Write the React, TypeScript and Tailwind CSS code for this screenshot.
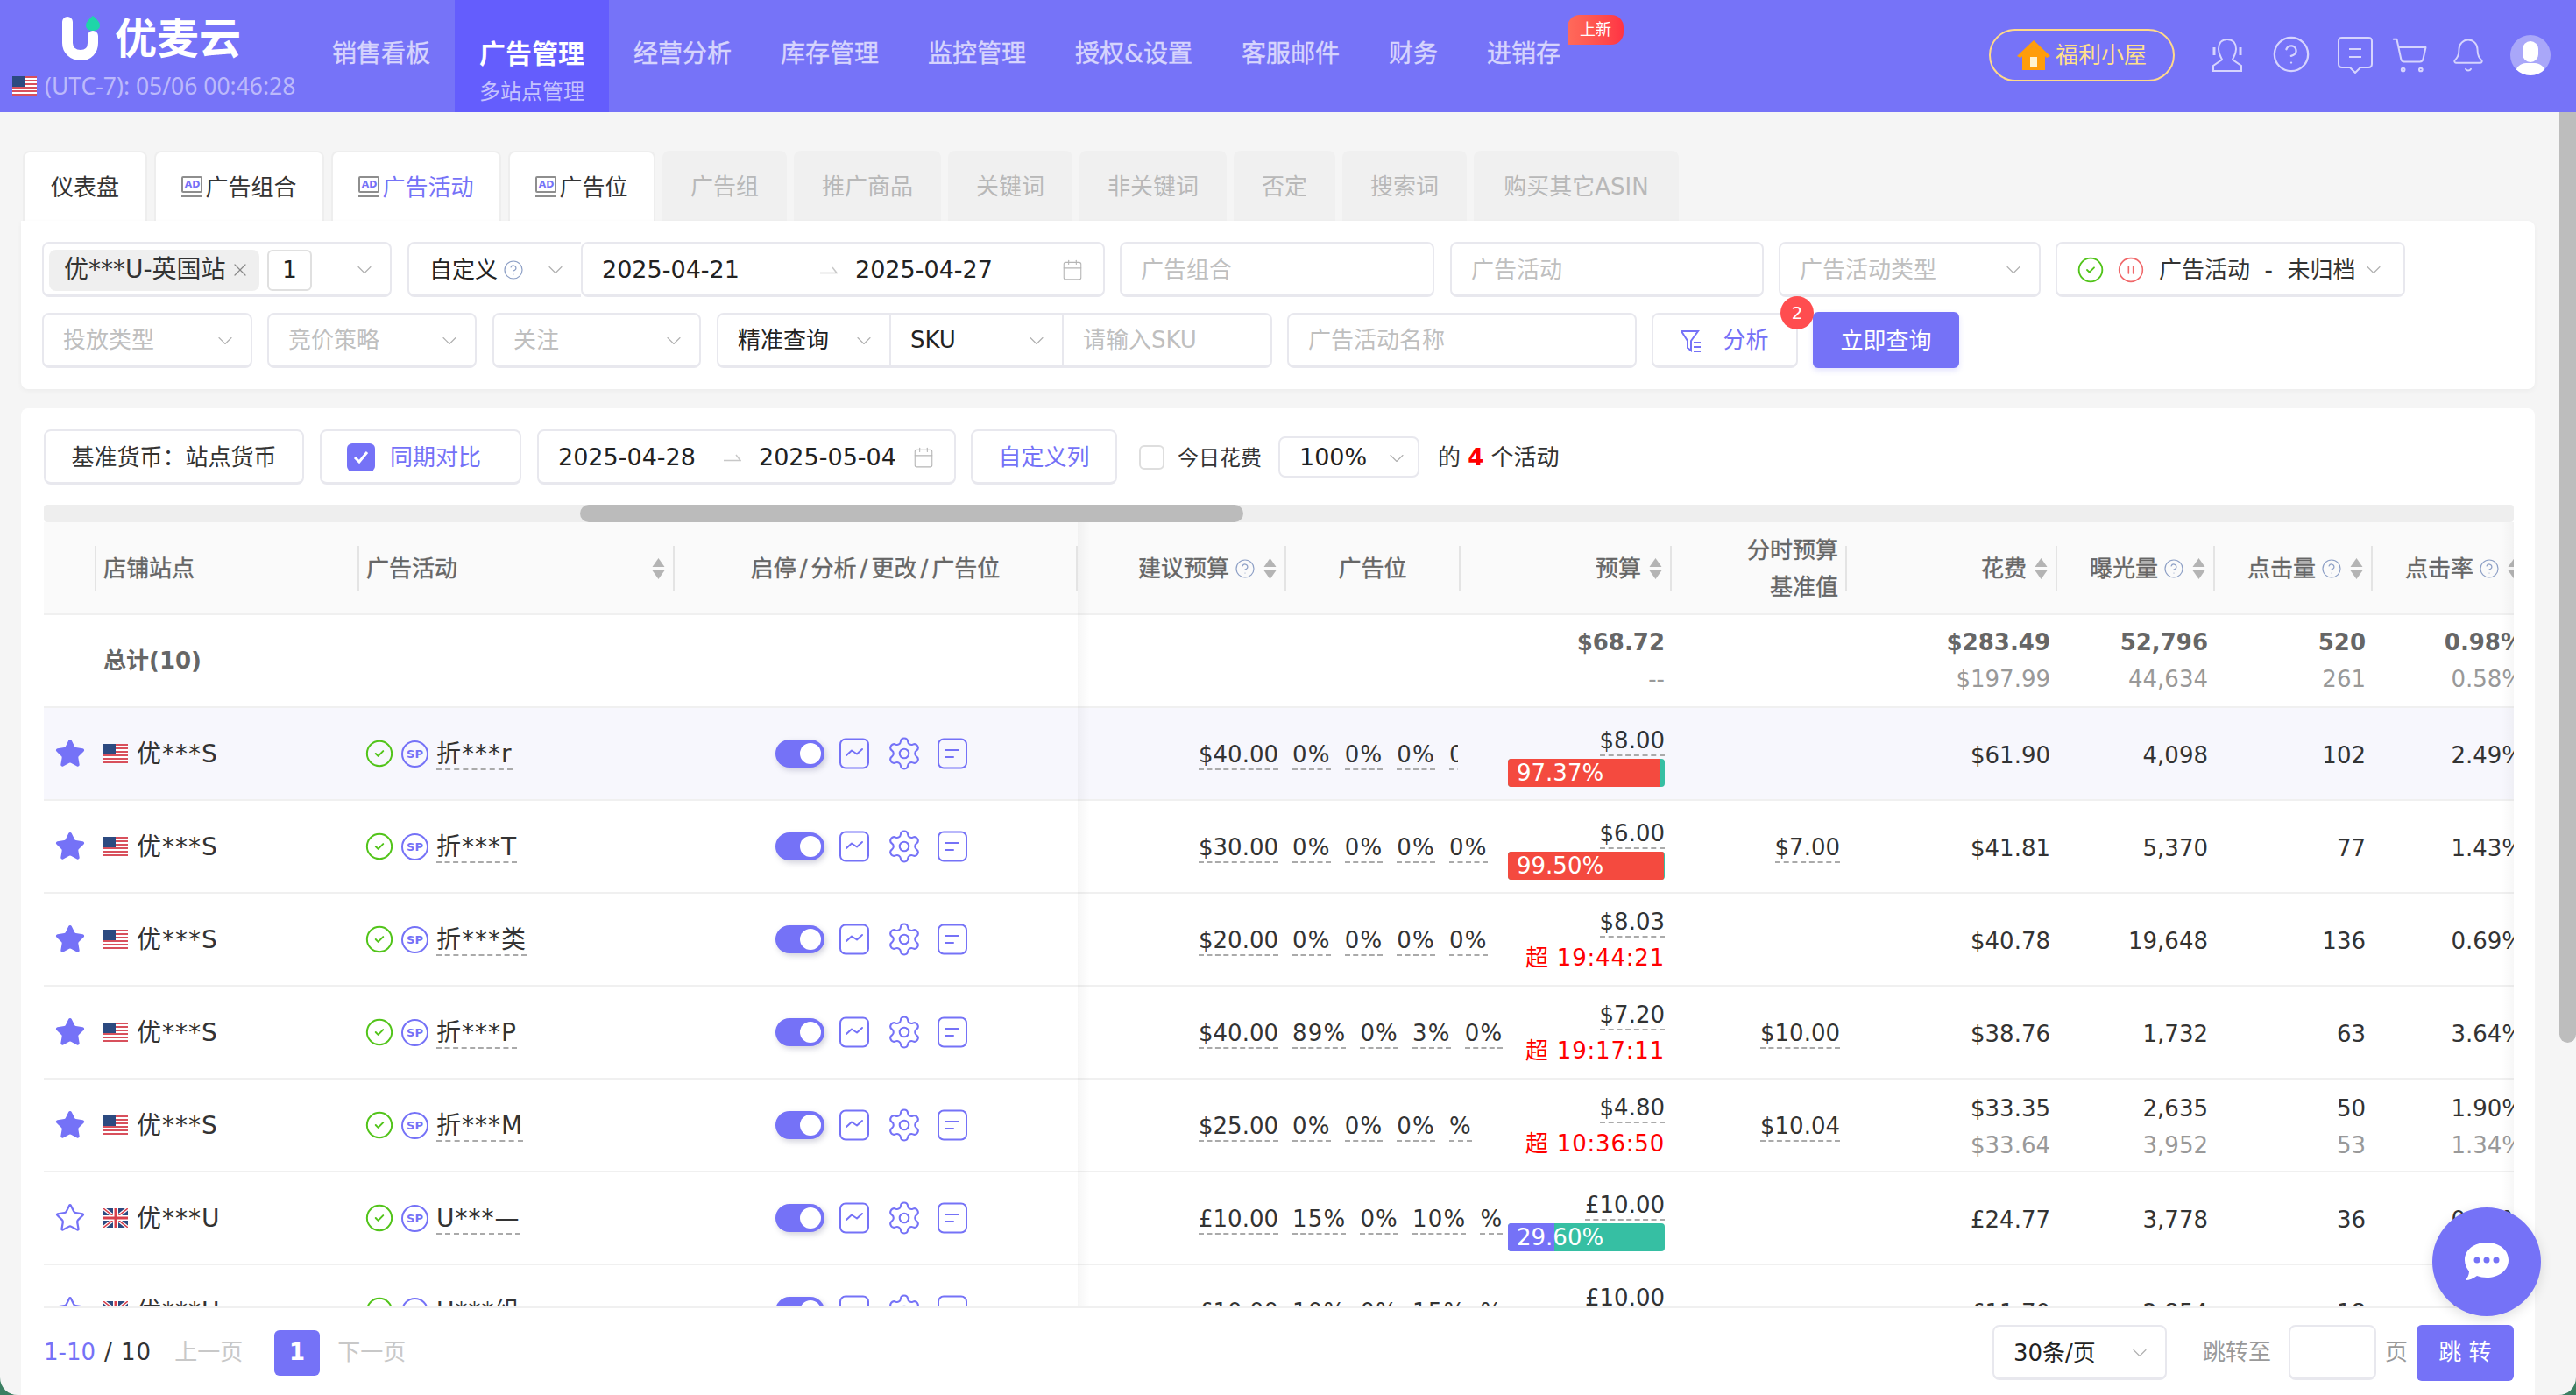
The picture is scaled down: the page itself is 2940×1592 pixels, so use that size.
import { Bell, Calendar, ChevronDown, CircleCheck, CircleHelp, CirclePause, ShoppingCart, Settings, Star, X } from "lucide-react";
import type { ReactNode } from "react";

const PURPLE = "#7572f7";

const navItems = [
  { label: "销售看板" },
  { label: "广告管理", active: true },
  { label: "经营分析" },
  { label: "库存管理" },
  { label: "监控管理" },
  { label: "授权&设置" },
  { label: "客服邮件" },
  { label: "财务" },
  { label: "进销存" },
];

const mutedTabs = [
  { label: "广告组", w: "w-[142px]" },
  { label: "推广商品", w: "w-[168px]" },
  { label: "关键词", w: "w-[142px]" },
  { label: "非关键词", w: "w-[168px]" },
  { label: "否定", w: "w-[116px]" },
  { label: "搜索词", w: "w-[142px]" },
  { label: "购买其它ASIN", w: "w-[234px]" },
];

type Row = {
  solid: boolean;
  flag: "us" | "uk";
  store: string;
  name: string;
  bid: string;
  pcts: string[];
  budget: string;
  bar?: { pct: number; left: string; right: string; label: string };
  over?: string;
  hourly?: string;
  spend: string[];
  shows: string[];
  clicks: string[];
  ctr: string[];
};

const rows: Row[] = [
  { solid: true, flag: "us", store: "优***S", name: "折***r", bid: "$40.00", pcts: ["0%", "0%", "0%", "0%"], budget: "$8.00", bar: { pct: 97.37, left: "#f44a3f", right: "#36bfa3", label: "97.37%" }, spend: ["$61.90"], shows: ["4,098"], clicks: ["102"], ctr: ["2.49%"] },
  { solid: true, flag: "us", store: "优***S", name: "折***T", bid: "$30.00", pcts: ["0%", "0%", "0%", "0%"], budget: "$6.00", bar: { pct: 99.5, left: "#f44a3f", right: "#36bfa3", label: "99.50%" }, hourly: "$7.00", spend: ["$41.81"], shows: ["5,370"], clicks: ["77"], ctr: ["1.43%"] },
  { solid: true, flag: "us", store: "优***S", name: "折***类", bid: "$20.00", pcts: ["0%", "0%", "0%", "0%"], budget: "$8.03", over: "19:44:21", spend: ["$40.78"], shows: ["19,648"], clicks: ["136"], ctr: ["0.69%"] },
  { solid: true, flag: "us", store: "优***S", name: "折***P", bid: "$40.00", pcts: ["89%", "0%", "3%", "0%"], budget: "$7.20", over: "19:17:11", hourly: "$10.00", spend: ["$38.76"], shows: ["1,732"], clicks: ["63"], ctr: ["3.64%"] },
  { solid: true, flag: "us", store: "优***S", name: "折***M", bid: "$25.00", pcts: ["0%", "0%", "0%", "%"], budget: "$4.80", over: "10:36:50", hourly: "$10.04", spend: ["$33.35", "$33.64"], shows: ["2,635", "3,952"], clicks: ["50", "53"], ctr: ["1.90%", "1.34%"] },
  { solid: false, flag: "uk", store: "优***U", name: "U***—", bid: "£10.00", pcts: ["15%", "0%", "10%", "%"], budget: "£10.00", bar: { pct: 29.6, left: PURPLE, right: "#36bfa3", label: "29.60%" }, spend: ["£24.77"], shows: ["3,778"], clicks: ["36"], ctr: ["0.95%"] },
  { solid: false, flag: "uk", store: "优***U", name: "U***组", bid: "£10.00", pcts: ["10%", "0%", "15%", "%"], budget: "£10.00", bar: { pct: 20, left: PURPLE, right: "#36bfa3", label: "" }, spend: ["£11.70"], shows: ["2,854"], clicks: ["18"], ctr: ["0.63%"] },
];

function UsFlag() {
  return (
    <svg width="28" height="22" viewBox="0 0 28 22" className="shrink-0">
      <rect width="28" height="22" fill="#fff" />
      {[0, 4, 8, 12, 16, 20].map((y) => (
        <rect key={y} y={y} width="28" height="2" fill="#d8505c" />
      ))}
      <rect width="14" height="12" fill="#2c4a80" />
    </svg>
  );
}

function UkFlag() {
  return (
    <svg width="28" height="22" viewBox="0 0 28 22" className="shrink-0">
      <rect width="28" height="22" fill="#2c4a80" />
      <path d="M0 0L28 22M28 0L0 22" stroke="#fff" strokeWidth="4" />
      <path d="M0 0L28 22M28 0L0 22" stroke="#d8404c" strokeWidth="1.5" />
      <path d="M14 0V22M0 11H28" stroke="#fff" strokeWidth="6" />
      <path d="M14 0V22M0 11H28" stroke="#d8404c" strokeWidth="3" />
    </svg>
  );
}

function Chevron() {
  return <ChevronDown size={28} strokeWidth={1} className="shrink-0 text-[#b0b0b0]" />;
}

function HalfArrow() {
  return (
    <svg width="20" height="10" viewBox="0 0 20 10" className="shrink-0">
      <path d="M0 8.5H19L14 2" fill="none" stroke="#c8c8c8" strokeWidth="1.5" />
    </svg>
  );
}

function Sorter() {
  return (
    <svg width="15" height="24" viewBox="0 0 15 24" className="shrink-0">
      <path d="M7.5 0L14.5 10H0.5Z" fill="#b4b4b4" />
      <path d="M7.5 24L14.5 14H0.5Z" fill="#b4b4b4" />
    </svg>
  );
}

function Help() {
  return <CircleHelp size={24} strokeWidth={1.2} className="-ml-[3px] shrink-0 text-[#8ea0c6]" />;
}

function AdMark() {
  return (
    <span className="mr-[3px] inline-flex h-[26px] w-[24px] flex-col">
      <span className="flex h-[19px] items-center justify-center rounded-[2px] border-2 border-[#8e8e8e] text-[11px] font-bold leading-none text-[#7572f7]">AD</span>
      <span className="mt-[3px] h-[2px] bg-[#8e8e8e]" />
    </span>
  );
}

function Field({ className = "", children }: { className?: string; children: ReactNode }) {
  return (
    <div className={`flex h-[63px] shrink-0 items-center justify-between border-2 border-b-[3px] border-[#e8e8ee] bg-white pt-[2px] ${className}`}>
      {children}
    </div>
  );
}

function SelectField({ w, label, dark }: { w: string; label: string; dark?: boolean }) {
  return (
    <Field className={`${w} rounded-[8px] pl-[22px] pr-[15px]`}>
      <span className={dark ? "text-[#222]" : "text-[#bfbfbf]"}>{label}</span>
      <Chevron />
    </Field>
  );
}

function InputField({ w, label }: { w: string; label: string }) {
  return (
    <Field className={`${w} rounded-[8px] pl-[22px]`}>
      <span className="text-[#bfbfbf]">{label}</span>
    </Field>
  );
}

function Dashed({ children, className = "" }: { children: ReactNode; className?: string }) {
  return (
    <span className={`inline-block border-b-2 border-dashed border-[#aaa] leading-[32px] whitespace-nowrap ${className}`}>
      {children}
    </span>
  );
}

function HeadCell({ w, children }: { w: string; children?: ReactNode }) {
  return (
    <div className={`flex h-[52px] shrink-0 items-center justify-end gap-[9px] border-r-2 border-[#e4e4e4] pr-[9px] ${w}`}>
      {children}
    </div>
  );
}

function Values({ w, lines, strong }: { w: string; lines: string[]; strong?: boolean }) {
  return (
    <div className={`shrink-0 pr-[8px] text-right ${w}`}>
      <div className={strong ? "font-bold leading-[42px] text-[#666]" : "leading-[42px] text-[#333]"}>{lines[0]}</div>
      {lines[1] && <div className="leading-[42px] text-[#999]">{lines[1]}</div>}
    </div>
  );
}

function ActionIcons() {
  return (
    <div className="flex w-[460px] shrink-0 items-center pl-[115px] text-[#7572f7]">
      <span className="relative h-[32px] w-[56px] rounded-full bg-[#7572f7] shadow-[2px_3px_6px_rgba(80,80,120,0.25)]">
        <span className="absolute right-[4px] top-[4px] h-[24px] w-[24px] rounded-full bg-white" />
      </span>
      <svg width="36" height="36" viewBox="0 0 36 36" fill="none" stroke="currentColor" strokeWidth="2" className="ml-[16px]">
        <rect x="2" y="1.5" width="32" height="33" rx="6" />
        <path d="M9 20L15 14.5L21 18.5L27 13" strokeLinecap="round" strokeLinejoin="round" />
      </svg>
      <Settings size={42} strokeWidth={1.2} className="ml-[18px]" />
      <svg width="36" height="36" viewBox="0 0 36 36" fill="none" stroke="currentColor" strokeWidth="2" className="ml-[16px]">
        <rect x="2" y="1.5" width="32" height="33" rx="6" />
        <path d="M10 14H25M10 22H19" strokeLinecap="round" />
      </svg>
    </div>
  );
}

function TableRow({ row, index }: { row: Row; index: number }) {
  return (
    <div className={`flex h-[106px] w-[3000px] items-center border-b-2 border-[#f0f0f0] text-[#333] ${index === 0 ? "bg-[#f7f7fd]" : ""}`}>
      <div className="flex w-[60px] shrink-0 justify-center">
        <Star size={36} strokeWidth={1.5} className="text-[#7572f7]" fill={row.solid ? PURPLE : "none"} />
      </div>
      <div className="flex w-[300px] shrink-0 items-center gap-[10px] pl-[8px]">
        {row.flag === "us" ? <UsFlag /> : <UkFlag />}
        <span className="pt-[2px] text-[28px] tracking-[1px]">{row.store}</span>
      </div>
      <div className="flex w-[360px] shrink-0 items-center pl-[6px]">
        <CircleCheck size={34} strokeWidth={1.4} className="shrink-0 text-[#52c41a]" />
        <span className="ml-[8px] flex h-[31px] w-[31px] shrink-0 items-center justify-center rounded-full border-2 border-[#7572f7] text-[13px] font-bold leading-none text-[#7572f7]">SP</span>
        <span className="ml-[9px] pt-[2px]"><Dashed className="text-[28px] tracking-[1px]">{row.name}</Dashed></span>
      </div>
      <ActionIcons />
      <div className="flex w-[438px] shrink-0 items-center gap-[16px] pl-[138px] pt-[3px] whitespace-nowrap">
        <Dashed>{row.bid}</Dashed>
        {row.pcts.map((p, i) =>
          index === 0 && i === 3 ? (
            <span key={i} className="w-[10px] overflow-hidden"><Dashed className="tracking-[1.2px]">{p}</Dashed></span>
          ) : (
            <Dashed key={i} className="tracking-[1.2px]">{p}</Dashed>
          ),
        )}
      </div>
      <div className="flex w-[240px] shrink-0 flex-col items-end pr-[8px] pt-[6px]">
        <Dashed>{row.budget}</Dashed>
        {row.bar && (
          <div className="relative mt-[3px] h-[32px] w-[179px] overflow-hidden rounded-[4px]" style={{ background: row.bar.right }}>
            <div className="h-full" style={{ width: `${row.bar.pct}%`, background: row.bar.left }} />
            <span className="absolute left-[10px] top-0 leading-[32px] text-white">{row.bar.label}</span>
          </div>
        )}
        {row.over && <div className="mt-[2px] leading-[42px] tracking-[0.8px] text-[#ff0000] whitespace-nowrap">超 {row.over}</div>}
      </div>
      <div className="flex w-[200px] shrink-0 justify-end pr-[8px] pt-[3px]">{row.hourly && <Dashed>{row.hourly}</Dashed>}</div>
      <div className="flex pt-[3px]">
        <Values w="w-[240px]" lines={row.spend} />
        <Values w="w-[180px]" lines={row.shows} />
        <Values w="w-[180px]" lines={row.clicks} />
        <Values w="w-[180px]" lines={row.ctr} />
      </div>
    </div>
  );
}

function Watermarks() {
  const marks: { x: number; y: number }[] = [];
  for (let j = 0; j < 30; j++) {
    for (let i = -2; i < 13; i++) {
      marks.push({ x: i * 288 + ((j % 2) * 134) + 40, y: j * 55 - i * 10 + 40 });
    }
  }
  return (
    <div className="pointer-events-none absolute bottom-0 left-0 right-0 top-[128px] overflow-hidden">
      {marks.map((m, i) => (
        <span
          key={i}
          className="absolute -rotate-[29deg] text-[30px] italic leading-none text-[rgba(0,0,0,0.025)]"
          style={{ left: m.x, top: m.y }}
        >
          17185
        </span>
      ))}
    </div>
  );
}

export default function App() {
  return (
    <div className="h-[1592px] w-full overflow-hidden bg-[#3b7f62]">
      <div className="relative flex h-full flex-col overflow-hidden rounded-b-[20px] bg-[#f5f5f5] text-[26px] [font-family:'DejaVu_Sans','Noto_Sans_CJK_SC',sans-serif]">
        {/* top bar */}
        <header className="flex h-[128px] shrink-0 bg-[#7673f8]">
          <div className="w-[351px] shrink-0 pl-[14px]">
            <div className="flex items-center pl-[56px] pt-[18px]">
              <svg width="46" height="52" viewBox="0 0 46 52">
                <path d="M7 7V31C7 39 13 45 22 45C31 45 36 39 36 31V23" fill="none" stroke="#fff" strokeWidth="12" strokeLinecap="round" />
                <path d="M36 0C41 4 44 8 44 11C44 15 40 17 36 17C32 17 28 15 28 11C28 8 31 4 36 0Z" fill="#1fd6a8" />
              </svg>
              <span className="ml-[15px] text-[48px] font-bold leading-[52px] text-white">优麦云</span>
            </div>
            <div className="mt-[12px] flex items-center gap-[9px]">
              <UsFlag />
              <span className="text-[26.5px] leading-[32px] text-[#bcb9fb] [font-family:'Noto_Sans',sans-serif]">(UTC-7): 05/06 00:46:28</span>
            </div>
          </div>
          <nav className="flex">
            {navItems.map((item) =>
              item.active ? (
                <div key={item.label} className="flex w-[176px] flex-col items-center bg-[#645dfd] pt-[40px]">
                  <span className="text-[30px] font-bold leading-[44px] text-white">{item.label}</span>
                  <span className="mt-[4px] text-[24px] leading-[34px] text-[#c5c2fd]">多站点管理</span>
                </div>
              ) : (
                <div key={item.label} className="relative px-[28px] pt-[42px] text-[28px] leading-[40px] text-[#d6d4fd] [-webkit-text-stroke:0.4px]">
                  {item.label}
                  {item.label === "进销存" && (
                    <span className="absolute left-[120px] top-[17px] h-[34px] w-[64px] rounded-[14px_14px_14px_0] bg-gradient-to-r from-[#ff6a5a] to-[#ff3344] text-center text-[18px] leading-[34px] text-white [-webkit-text-stroke:0px]">
                      上新
                    </span>
                  )}
                </div>
              ),
            )}
          </nav>
          <div className="ml-auto flex items-start pr-[29px] pt-[33px] text-[#d6d4fd]">
            <div className="flex h-[60px] w-[212px] items-center justify-center gap-[6px] rounded-full border-2 border-[#ffd98a] text-[#ffe08a]">
              <svg width="38" height="34" viewBox="0 0 38 34">
                <path d="M19 0L38 18L34 20L19 6L4 20L0 18Z" fill="#ff9d0a" />
                <path d="M6 17L19 6L32 17V34H6Z" fill="#ff9d0a" />
                <rect x="15" y="19" width="8" height="11" fill="#fff3d0" />
              </svg>
              <span>福利小屋</span>
            </div>
            <svg width="36" height="40" viewBox="0 0 36 40" fill="none" stroke="currentColor" strokeWidth="2" className="ml-[42px] mt-[10px]">
              <path d="M18 2C11 2 8 7 8 13C8 19 11 22 12 25L2 32V38H34V32L24 25C25 22 28 19 28 13C28 7 25 2 18 2Z" />
              <path d="M3 11V20M33 11V20" strokeWidth="3" />
            </svg>
            <CircleHelp size={46} strokeWidth={1.2} className="ml-[32px] mt-[6px]" />
            <svg width="40" height="42" viewBox="0 0 40 42" fill="none" stroke="currentColor" strokeWidth="2" className="ml-[30px] mt-[9px]">
              <path d="M5 1H35Q39 1 39 5V31Q39 35 35 35H26L20 41L14 35H5Q1 35 1 31V5Q1 1 5 1Z" />
              <path d="M13 14H27M13 23H27" />
            </svg>
            <ShoppingCart size={44} strokeWidth={1.1} className="ml-[20px] mt-[8px]" />
            <Bell size={42} strokeWidth={1.1} className="ml-[24px] mt-[9px]" />
            <div className="relative ml-[27px] mt-[7px] h-[46px] w-[46px] overflow-hidden rounded-full bg-[#a9a7f9]">
              <span className="absolute left-[14px] top-[7px] h-[24px] w-[18px] rounded-full bg-white" />
              <span className="absolute left-[6px] top-[32px] h-[24px] w-[34px] rounded-full bg-white" />
            </div>
          </div>
        </header>

        <div className="flex min-h-0 flex-1">
          <main className="flex min-w-0 flex-1 flex-col pl-[24px] pr-[28px]">
            {/* tabs */}
            <div className="mt-[44px] flex h-[80px] shrink-0 gap-[8px] pl-[2px]">
              <div className="flex w-[142px] items-center justify-center rounded-t-[8px] border-2 border-b-0 border-[#eeeeee] bg-white pt-[2px] text-[#333]">仪表盘</div>
              {[
                { label: "广告组合", w: "w-[194px]", color: "text-[#333]" },
                { label: "广告活动", w: "w-[194px]", color: "text-[#7572f7]" },
                { label: "广告位", w: "w-[168px]", color: "text-[#333]" },
              ].map((t) => (
                <div key={t.label} className={`flex items-center justify-center rounded-t-[8px] border-2 border-b-0 border-[#eeeeee] bg-white pt-[2px] ${t.w} ${t.color}`}>
                  <AdMark />
                  {t.label}
                </div>
              ))}
              {mutedTabs.map((t) => (
                <div key={t.label} className={`flex items-center justify-center rounded-t-[8px] bg-[#f0f0f0] pt-[2px] text-[#b8b8b8] ${t.w}`}>
                  {t.label}
                </div>
              ))}
            </div>

            {/* filters */}
            <section className="flex h-[192px] shrink-0 flex-col gap-[17px] rounded-b-[8px] rounded-tr-[8px] bg-white px-[24px] pt-[24px] shadow-[0_2px_6px_rgba(0,0,0,0.04)]">
              <div className="flex items-center">
                <Field className="w-[399px] rounded-[8px] pl-[6px] pr-[15px]">
                  <div className="flex items-center gap-[9px]">
                    <span className="flex h-[47px] w-[240px] items-center justify-between rounded-[8px] bg-[#efefef] pl-[19px] pr-[10px] text-[28px] text-[#333]">
                      <span className="-ml-[2px] whitespace-nowrap">优***U-英国站</span>
                      <X size={24} strokeWidth={1.2} className="shrink-0 text-[#888]" />
                    </span>
                    <span className="flex h-[47px] w-[51px] items-center justify-center rounded-[6px] border-2 border-[#e0e0e0] text-[#222]">1</span>
                  </div>
                  <Chevron />
                </Field>
                <Field className="ml-[18px] w-[198px] rounded-l-[8px] border-r-0 pl-[23px] pr-[15px]">
                  <span className="flex items-center gap-[9px] text-[#222]">自定义 <Help /></span>
                  <Chevron />
                </Field>
                <Field className="w-[598px] rounded-[8px] pl-[22px] pr-[22px] text-[27px]">
                  <span className="w-[249px] text-[#222]">2025-04-21</span>
                  <HalfArrow />
                  <span className="ml-[20px] text-[#222]">2025-04-27</span>
                  <Calendar size={26} strokeWidth={1} className="ml-auto text-[#b5b5b5]" />
                </Field>
                <div className="ml-[17px]"><InputField w="w-[359px]" label="广告组合" /></div>
                <div className="ml-[18px]"><InputField w="w-[358px]" label="广告活动" /></div>
                <div className="ml-[17px]"><SelectField w="w-[299px]" label="广告活动类型" /></div>
                <Field className="ml-[17px] w-[399px] rounded-[8px] pl-[22px] pr-[20px]">
                  <CircleCheck size={32} strokeWidth={1.4} className="text-[#52c41a]" />
                  <CirclePause size={32} strokeWidth={1.2} className="ml-[14px] text-[#f0686a]" />
                  <span className="ml-[16px] whitespace-pre text-[#333]">广告活动  -  未归档</span>
                  <span className="ml-auto"><Chevron /></span>
                </Field>
              </div>
              <div className="flex items-center">
                <SelectField w="w-[240px]" label="投放类型" />
                <div className="ml-[17px]"><SelectField w="w-[239px]" label="竞价策略" /></div>
                <div className="ml-[18px]"><SelectField w="w-[238px]" label="关注" /></div>
                <Field className="ml-[18px] w-[197px] rounded-l-[8px] border-r-0 pl-[22px] pr-[15px]">
                  <span className="text-[#222]">精准查询</span>
                  <Chevron />
                </Field>
                <Field className="w-[199px] border-x-2 pl-[22px] pr-[15px]">
                  <span className="text-[#222]">SKU</span>
                  <Chevron />
                </Field>
                <Field className="w-[238px] rounded-r-[8px] border-l-0 pl-[22px]">
                  <span className="text-[#bfbfbf]">请输入SKU</span>
                </Field>
                <div className="ml-[17px]"><InputField w="w-[399px]" label="广告活动名称" /></div>
                <Field className="relative ml-[17px] w-[167px] justify-center gap-[24px] rounded-[8px] text-[#7572f7]">
                  <svg width="24" height="26" viewBox="0 0 24 26" fill="none" stroke="currentColor" strokeWidth="2">
                    <path d="M1 2H20L12 13V24L8 21V13Z" />
                    <path d="M15 15H23M15 20H23M15 25H23" />
                  </svg>
                  <span>分析</span>
                  <span className="absolute -right-[20px] -top-[21px] flex h-[38px] w-[38px] items-center justify-center rounded-full bg-[#ff4d4f] text-[20px] text-white">2</span>
                </Field>
                <button className="ml-[17px] h-[64px] w-[167px] rounded-[6px] bg-[#7572f7] pt-[2px] text-white shadow-[0_3px_6px_rgba(117,114,247,0.2)]">立即查询</button>
              </div>
            </section>

            {/* table panel */}
            <section className="mt-[22px] flex min-h-0 flex-1 flex-col rounded-t-[8px] bg-white pl-[26px] pr-[24px] pt-[24px]">
              <div className="flex h-[63px] shrink-0 items-center">
                <Field className="w-[297px] justify-center rounded-[8px] text-[#333]">基准货币：站点货币</Field>
                <Field className="ml-[18px] w-[230px] justify-start rounded-[8px] pl-[29px] text-[#7572f7]">
                  <span className="flex h-[32px] w-[32px] items-center justify-center rounded-[6px] bg-[#7572f7]">
                    <svg width="18" height="16" viewBox="0 0 18 16" fill="none" stroke="#fff" strokeWidth="3"><path d="M2 8L7 13L16 2" /></svg>
                  </span>
                  <span className="ml-[17px]">同期对比</span>
                </Field>
                <Field className="ml-[18px] w-[478px] rounded-[8px] pl-[22px] pr-[22px] text-[27px] text-[#222]">
                  <span className="w-[189px]">2025-04-28</span>
                  <HalfArrow />
                  <span className="ml-[20px]">2025-05-04</span>
                  <Calendar size={26} strokeWidth={1} className="ml-auto text-[#b5b5b5]" />
                </Field>
                <Field className="ml-[17px] w-[167px] justify-center rounded-[8px] text-[#7572f7]">自定义列</Field>
                <span className="ml-[25px] h-[28px] w-[29px] rounded-[6px] border-2 border-[#dedede]" />
                <span className="ml-[15px] pt-[2px] text-[24px] text-[#333]">今日花费</span>
                <div className="ml-[19px] flex h-[47px] w-[161px] items-center justify-between rounded-[8px] border-2 border-[#e8e8ee] pl-[22px] pr-[10px] pt-[2px] text-[27px] text-[#222]">
                  100%
                  <Chevron />
                </div>
                <span className="ml-[21px] pt-[2px] text-[#333]">的 <b className="text-[#ff0000]">4</b> 个活动</span>
              </div>

              <div className="relative mt-[23px] min-h-0 flex-1 overflow-hidden">
                <div className="relative h-[20px] rounded-[4px] bg-[#eeeeee]">
                  <div className="absolute left-[612px] top-0 h-[20px] w-[757px] rounded-full bg-[#bbbbbb]" />
                </div>
                <div className="flex h-[106px] w-[3000px] items-center border-b-2 border-[#f0f0f0] bg-[#fafafa] pt-[2px] text-[#666] [-webkit-text-stroke:0.4px]">
                  <HeadCell w="w-[60px]" />
                  <div className="flex h-[52px] w-[300px] shrink-0 items-center border-r-2 border-[#e4e4e4] pl-[8px]">店铺站点</div>
                  <div className="flex h-[52px] w-[360px] shrink-0 items-center justify-between border-r-2 border-[#e4e4e4] pl-[8px] pr-[9px]">
                    广告活动
                    <Sorter />
                  </div>
                  <div className="flex h-[52px] w-[460px] shrink-0 items-center justify-center border-r-2 border-[#e4e4e4]">
                    启停<span className="mx-[4px]">/</span>分析<span className="mx-[4px]">/</span>更改<span className="mx-[4px]">/</span>广告位
                  </div>
                  <HeadCell w="w-[238px]">建议预算 <Help /> <Sorter /></HeadCell>
                  <div className="flex h-[52px] w-[199px] shrink-0 items-center justify-center border-r-2 border-[#e4e4e4]">广告位</div>
                  <HeadCell w="w-[241px]">预算 <Sorter /></HeadCell>
                  <div className="flex h-[52px] w-[200px] shrink-0 items-center justify-end border-r-2 border-[#e4e4e4] pr-[8px] text-right leading-[42px]">
                    <span>分时预算<br />基准值</span>
                  </div>
                  <HeadCell w="w-[240px]">花费 <Sorter /></HeadCell>
                  <HeadCell w="w-[180px]">曝光量 <Help /> <Sorter /></HeadCell>
                  <HeadCell w="w-[180px]">点击量 <Help /> <Sorter /></HeadCell>
                  <HeadCell w="w-[180px]">点击率 <Help /> <Sorter /></HeadCell>
                </div>
                <div className="flex h-[106px] w-[3000px] items-center border-b-2 border-[#f0f0f0]">
                  <div className="w-[1180px] shrink-0 pl-[68px] font-bold text-[#666]">总计(10)</div>
                  <div className="w-[438px] shrink-0" />
                  <Values w="w-[240px]" lines={["$68.72", "--"]} strong />
                  <div className="w-[200px] shrink-0" />
                  <Values w="w-[240px]" lines={["$283.49", "$197.99"]} strong />
                  <Values w="w-[180px]" lines={["52,796", "44,634"]} strong />
                  <Values w="w-[180px]" lines={["520", "261"]} strong />
                  <Values w="w-[180px]" lines={["0.98%", "0.58%"]} strong />
                </div>
                {rows.map((row, i) => (
                  <TableRow key={i} row={row} index={i} />
                ))}
                <div className="absolute bottom-0 left-[1180px] top-[20px] w-[14px] bg-gradient-to-r from-[rgba(0,0,0,0.035)] to-transparent" />
                <div className="absolute bottom-0 right-0 top-[20px] w-[14px] bg-gradient-to-l from-[rgba(0,0,0,0.03)] to-transparent" />
              </div>

              {/* pager */}
              <div className="flex h-[101px] shrink-0 items-center border-t-2 border-[#f0f0f0] pt-[2px]">
                <span className="text-[#7572f7]">1-10</span>
                <span className="ml-[10px] tracking-[1px] text-[#333]">/ 10</span>
                <span className="ml-[26px] text-[#c8c8c8]">上一页</span>
                <span className="ml-[36px] flex h-[52px] w-[52px] items-center justify-center rounded-[6px] bg-[#7572f7] font-bold text-white">1</span>
                <span className="ml-[20px] text-[#c8c8c8]">下一页</span>
                <div className="ml-auto flex items-center">
                  <Field className="w-[199px] rounded-[8px] pl-[22px] pr-[15px] text-[#222]">
                    30条/页
                    <Chevron />
                  </Field>
                  <span className="ml-[41px] text-[#999]">跳转至</span>
                  <Field className="ml-[20px] w-[100px] rounded-[8px]"><span /></Field>
                  <span className="ml-[10px] text-[#999]">页</span>
                  <button className="ml-[10px] h-[64px] w-[111px] rounded-[6px] bg-[#7572f7] text-white">跳 转</button>
                </div>
              </div>
            </section>
          </main>
          <aside className="w-[19px] shrink-0">
            <div className="h-[1062px] rounded-b-full rounded-t-[10px] bg-[#bdbdbd]" />
          </aside>
        </div>

        <Watermarks />

        {/* chat bubble */}
        <div className="absolute bottom-[90px] right-[40px] flex h-[124px] w-[124px] items-center justify-center rounded-full bg-[#7572f7] shadow-[0_4px_14px_rgba(0,0,0,0.12)]">
          <svg width="50" height="44" viewBox="0 0 50 44">
            <path d="M25 0C39 0 50 8 50 20C50 32 39 40 25 40C21 40 17 39 14 38C10 41 5 43 1 43C3 40 5 37 5 33C2 29 0 25 0 20C0 8 11 0 25 0Z" fill="#fff" />
            <circle cx="14" cy="20" r="3.5" fill={PURPLE} />
            <circle cx="25" cy="20" r="3.5" fill={PURPLE} />
            <circle cx="36" cy="20" r="3.5" fill={PURPLE} />
          </svg>
        </div>
      </div>
    </div>
  );
}
